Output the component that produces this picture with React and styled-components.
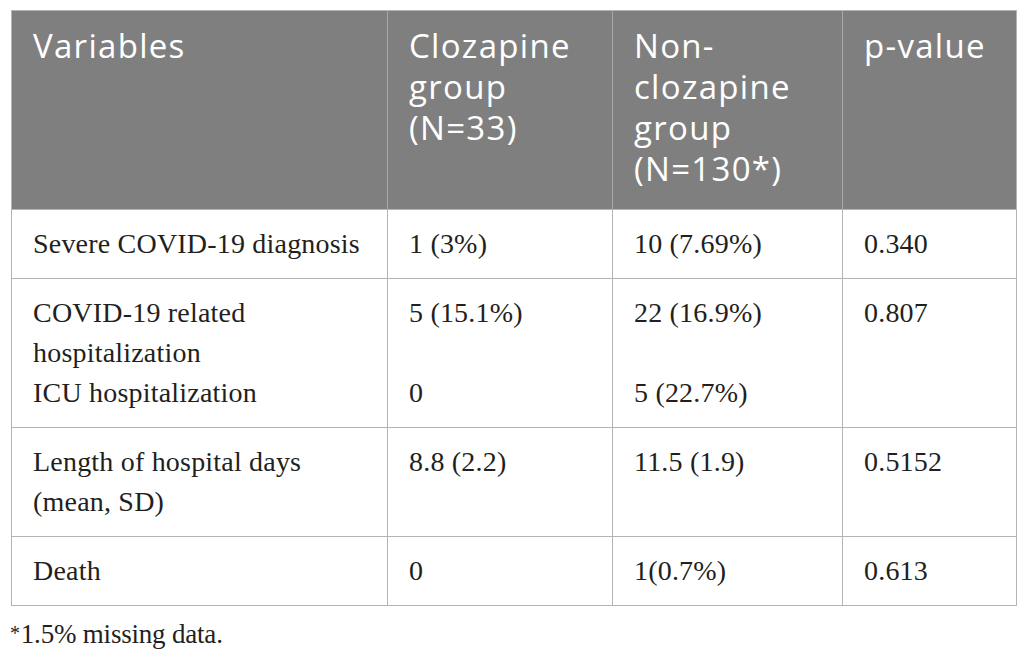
import React from 'react';
import styled, { createGlobalStyle } from 'styled-components';

const GlobalStyle = createGlobalStyle`
  html, body {
    margin: 0;
    padding: 0;
    background: #ffffff;
  }
`;

const Page = styled.div`
  padding: 10px 10px 0 11px;
  font-family: 'Liberation Serif', 'Times New Roman', serif;
  color: #231f20;
`;

const Table = styled.table`
  width: 1005px;
  table-layout: fixed;
  border-collapse: collapse;
  border: 1px solid #b4b4b4;
`;

const HeadCell = styled.th`
  background: #7f7f7f;
  color: #ffffff;
  font-family: 'Open Sans', 'DejaVu Sans', sans-serif;
  font-weight: 400;
  font-size: 33px;
  letter-spacing: 1.3px;
  line-height: 41px;
  text-align: left;
  vertical-align: top;
  padding: 14px 20px 20px 21px;
  border-left: 1px solid #a9a9a9;
  &:first-child {
    border-left: none;
  }
`;

const Cell = styled.td`
  font-size: 28px;
  letter-spacing: 0.2px;
  line-height: 40px;
  vertical-align: top;
  padding: 14px 18px 14px 21px;
  border: 1px solid #b4b4b4;
`;

const Line = styled.div`
  height: 40px;
  white-space: nowrap;
`;

const Footnote = styled.p`
  margin: 7px 0 0 -1px;
  font-size: 27px;
  letter-spacing: -0.2px;
  line-height: 40px;
`;

const Star = styled.span`
  font-size: 20px;
  vertical-align: 3px;
  margin-right: 1px;
`;

const columns = [376, 225, 230, 174];

const headers = [
  ['Variables'],
  ['Clozapine', 'group', '(N=33)'],
  ['Non-', 'clozapine', 'group', '(N=130*)'],
  ['p-value'],
];

const rows = [
  [['Severe COVID-19 diagnosis'], ['1 (3%)'], ['10 (7.69%)'], ['0.340']],
  [
    ['COVID-19 related', 'hospitalization', 'ICU hospitalization'],
    ['5 (15.1%)', '', '0'],
    ['22 (16.9%)', '', '5 (22.7%)'],
    ['0.807'],
  ],
  [['Length of hospital days', '(mean, SD)'], ['8.8 (2.2)'], ['11.5 (1.9)'], ['0.5152']],
  [['Death'], ['0'], ['1(0.7%)'], ['0.613']],
];

function App() {
  return (
    <Page>
      <GlobalStyle />
      <Table>
        <colgroup>
          {columns.map((w, i) => (
            <col key={i} style={{ width: w }} />
          ))}
        </colgroup>
        <thead>
          <tr>
            {headers.map((lines, i) => (
              <HeadCell key={i}>
                {lines.map((l, j) => (
                  <div key={j}>{l}</div>
                ))}
              </HeadCell>
            ))}
          </tr>
        </thead>
        <tbody>
          {rows.map((row, r) => (
            <tr key={r}>
              {row.map((lines, c) => (
                <Cell key={c}>
                  {lines.map((l, j) => (
                    <Line key={j}>{l}</Line>
                  ))}
                </Cell>
              ))}
            </tr>
          ))}
        </tbody>
      </Table>
      <Footnote>
        <Star>*</Star>1.5% missing data.
      </Footnote>
    </Page>
  );
}

export default App;
